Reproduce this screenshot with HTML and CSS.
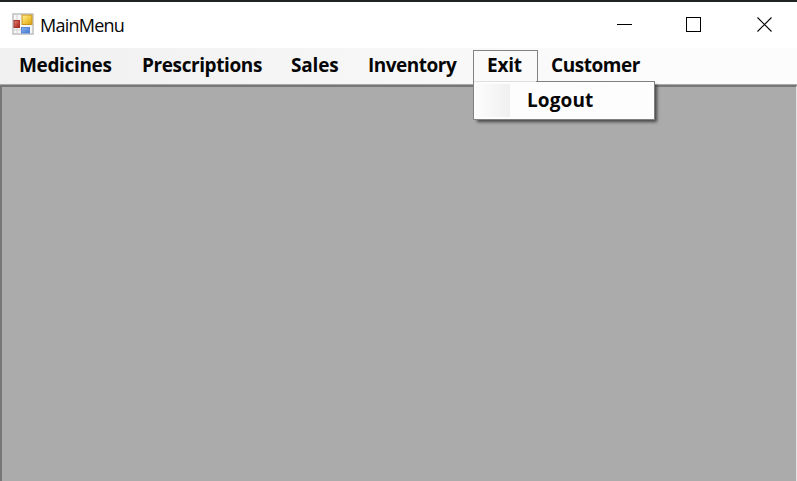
FILE: index.html
```html
<!DOCTYPE html>
<html lang="en">
<head>
<meta charset="utf-8">
<title>MainMenu</title>
<link rel="stylesheet" href="styles.css">
</head>
<body>
<div class="window">
  <header class="titlebar">
    <svg class="app-icon" width="22" height="22" viewBox="0 0 22 22">
      <defs>
        <linearGradient id="gold" x2="1" y2="1"><stop stop-color="#fff0a0"/><stop offset=".5" stop-color="#f3cc45"/><stop offset="1" stop-color="#d99c10"/></linearGradient>
        <linearGradient id="red" x2="1" y2="1"><stop stop-color="#e0887c"/><stop offset="1" stop-color="#a8180c"/></linearGradient>
        <linearGradient id="blue" x2="1" y2="1"><stop stop-color="#8db8f5"/><stop offset="1" stop-color="#3f74d0"/></linearGradient>
      </defs>
      <rect x="1" y="1" width="20" height="20" fill="#f6f6f6" stroke="#c0c0c0" stroke-width="1.5"/>
      <path d="M5 1v20M1 17h8" stroke="#d5d5d5"/>
      <rect x="2" y="7.5" width="5.5" height="7" fill="url(#red)" stroke="#a8362c"/>
      <rect x="10" y="2" width="10" height="9.5" fill="url(#gold)" stroke="#c9951d"/>
      <rect x="9.5" y="14.5" width="8" height="5.5" fill="url(#blue)" stroke="#5b86d2"/>
    </svg>
    <h1 class="title">MainMenu</h1>
    <svg class="controls" width="157" height="16" viewBox="0 0 157 16" fill="none" stroke="#000" shape-rendering="crispEdges">
      <path d="M0 7.5h15M69.5.5h14v14h-14z"/>
      <path d="M140.5.5l14 14M154.5.5l-14 14" shape-rendering="auto" stroke-width="1.1"/>
    </svg>
  </header>
  <nav class="menubar">
    <div class="item medicines">Medicines</div>
    <div class="item prescriptions">Prescriptions</div>
    <div class="item sales">Sales</div>
    <div class="item inventory">Inventory</div>
    <div class="item exit">Exit
      <div class="dropdown"><span class="gutter"></span><span class="entry">Logout</span></div>
    </div>
    <div class="item customer">Customer</div>
  </nav>
  <main class="workspace"></main>
</div>
</body>
</html>
```
FILE: styles.css
```css
* { box-sizing: border-box; }
body { margin: 0; overflow: hidden; }
.window {
  width: 797px;
  height: 481px;
  display: flex;
  flex-direction: column;
  background: #fff;
  border-top: 2px solid #202424;
  color: #060606;
}
.titlebar {
  height: 46px;
  flex: none;
  display: flex;
  align-items: flex-start;
  padding: 11px 23px 0 12px;
}
.app-icon { flex: none; }
.title {
  margin: 0 auto 0 6px;
  font: 400 18px/25px "Open Sans", sans-serif;
  letter-spacing: -0.75px;
}
.controls { margin-top: 4px; flex: none; }
.menubar {
  height: 37px;
  flex: none;
  display: flex;
  padding: 2px 0 0 5px;
  background: linear-gradient(90deg, #f0f0f0, #fcfcfc 85%);
  font: 700 19px/31px "Open Sans", sans-serif;
  white-space: nowrap;
}
.item { height: 32px; padding-left: 14px; }
.medicines { width: 123px; letter-spacing: -0.35px; }
.prescriptions { width: 149px; letter-spacing: -0.4px; }
.sales { width: 77px; letter-spacing: -0.2px; }
.inventory { width: 119px; letter-spacing: -0.5px; }
.exit {
  position: relative;
  width: 65px;
  height: 32px;
  padding-left: 13px;
  line-height: 29px;
  letter-spacing: -0.2px;
  background: #fafafa;
  border: 1px solid #828282;
  border-bottom: 0;
}
.customer { padding-left: 13px; letter-spacing: -0.45px; }
.dropdown {
  position: absolute;
  z-index: 1;
  top: 30px;
  left: -1px;
  width: 182px;
  height: 39px;
  display: flex;
  padding: 3px 2px 2px;
  letter-spacing: 0.1px;
  background: linear-gradient(#e0e0e0, #e0e0e0) 0 0 / 62px 1px no-repeat, #fdfdfd;
  border: 1px solid #808080;
  border-top: 0;
  box-shadow: 3px 3px 3px -1px rgba(0, 0, 0, .6);
}
.dropdown::before {
  content: "";
  position: absolute;
  top: 0;
  left: 62px;
  right: 0;
  border-top: 1px solid #808080;
}
.gutter { width: 34px; background: linear-gradient(90deg, #fcfcfc, #f0f0f0); }
.entry { margin-left: 17px; line-height: 32px; }
.workspace {
  flex: 1;
  background: #ababab;
  border-top: 2px solid #777;
  border-left: 2px solid #777;
  border-right: 1px solid #e4e4e4;
  box-shadow: 0 -1px #a8a8a8;
}
```
